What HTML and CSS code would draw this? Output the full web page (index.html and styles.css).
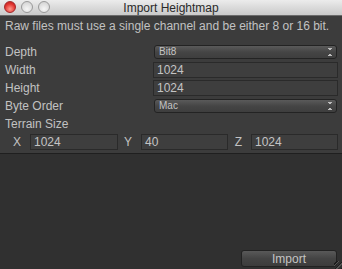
FILE: index.html
```html
<!DOCTYPE html>
<html lang="en">
<head>
    <meta charset="UTF-8">
    <title>Import Heightmap</title>
    <link rel="stylesheet" href="styles.css">
</head>
<body>

    <div class="window">
        <div class="titlebar">
            <div class="lights">
                <span class="light close"></span>
                <span class="light"></span>
                <span class="light"></span>
            </div>
            <div class="title">Import Heightmap</div>
        </div>

        <div class="panel">
            <p class="note">Raw files must use a single channel and be either 8 or 16 bit.</p>
            <div class="row">
                <label>Depth</label>
                <div class="popup">Bit8<span class="arrows"></span></div>
            </div>
            <div class="row">
                <label>Width</label>
                <div class="field">1024</div>
            </div>
            <div class="row">
                <label>Height</label>
                <div class="field">1024</div>
            </div>
            <div class="row">
                <label>Byte Order</label>
                <div class="popup">Mac<span class="arrows"></span></div>
            </div>
            <div class="row">
                <label>Terrain Size</label>
            </div>
            <div class="xyz">
                <label>X</label>
                <div class="field">1024</div>
                <label>Y</label>
                <div class="field">40</div>
                <label>Z</label>
                <div class="field">1024</div>
            </div>
        </div>

        <div class="footer">
            <button type="button">Import</button>
            <span class="grip"></span>
        </div>
    </div>

</body>
</html>
```

FILE: styles.css
```css
body {
    margin: 0;
    font-family: "Liberation Sans", Arial, sans-serif;
    background-color: #303030;
}
.window {
    width: 342px;
    height: 269px;
    display: flex;
    flex-direction: column;
    overflow: hidden;
}
.titlebar {
    height: 16px;
    position: relative;
    background: linear-gradient(#ececec, #c9c9c9);
    border-bottom: 1px solid #6a6a6a;
    box-sizing: border-box;
}
.lights {
    display: flex;
    gap: 5px;
    padding: 1px 0 0 4px;
}
.light {
    width: 12px;
    height: 12px;
    border-radius: 50%;
    box-sizing: border-box;
    border: 1px solid #9a9a9a;
    background: radial-gradient(circle at 50% 70%, #f6f6f6, #cdcdcd);
}
.light.close {
    border-color: #a3282a;
    background: radial-gradient(circle at 50% 70%, #ff9a8c, #e0332f 60%, #b81d1d);
}
.title {
    position: absolute;
    top: 1px;
    left: 0;
    right: 0;
    text-align: center;
    font-size: 12px;
    color: #2a2a2a;
}
.panel {
    background-color: #3c3c3c;
    padding: 1px 4px 2px 5px;
    border-bottom: 1px solid #1f1f1f;
    color: #c2c2c2;
}
.note {
    margin: 0 0 8px 0;
    height: 18px;
    line-height: 18px;
    font-size: 12px;
}
.row {
    display: flex;
    align-items: center;
    height: 18px;
}
.row label {
    width: 148px;
    font-size: 12px;
}
.row .field {
    flex: 1;
}
.field {
    height: 16px;
    box-sizing: border-box;
    background-color: #3e3e3e;
    border: 1px solid #2a2a2a;
    font-size: 12px;
    line-height: 14px;
    padding-left: 3px;
    color: #c4c4c4;
}
.popup {
    flex: 1;
    margin: 0 1px;
    height: 14px;
    box-sizing: border-box;
    border: 1px solid #232323;
    border-radius: 3px;
    background: linear-gradient(#5a5a5a, #454545 50%, #3e3e3e);
    font-size: 10px;
    line-height: 12px;
    padding-left: 4px;
    color: #c4c4c4;
    display: flex;
    justify-content: space-between;
    align-items: center;
}
.arrows {
    width: 4px;
    height: 8px;
    margin-right: 4px;
    background:
        linear-gradient(to top right, transparent 50%, #bdbdbd 50%) 0 0 / 2px 3px no-repeat,
        linear-gradient(to top left, transparent 50%, #bdbdbd 50%) 2px 0 / 2px 3px no-repeat,
        linear-gradient(to bottom right, transparent 50%, #bdbdbd 50%) 0 5px / 2px 3px no-repeat,
        linear-gradient(to bottom left, transparent 50%, #bdbdbd 50%) 2px 5px / 2px 3px no-repeat;
}
.xyz {
    display: grid;
    grid-template-columns: 25px 88px 23px 87px 23px 87px;
    align-items: center;
    height: 18px;
}
.xyz label {
    font-size: 12px;
    text-align: right;
    padding-right: 9px;
}
.footer {
    flex: 1;
    position: relative;
    display: flex;
    justify-content: flex-end;
    align-items: flex-end;
    padding: 0 5px 2px 0;
}
button {
    width: 96px;
    height: 17px;
    padding: 0;
    font-family: "Liberation Sans", Arial, sans-serif;
    font-size: 12px;
    color: #c4c4c4;
    border: 1px solid #222;
    border-radius: 3px;
    background: linear-gradient(#595959, #444 50%, #3c3c3c);
}
.grip {
    position: absolute;
    right: 0;
    bottom: 0;
    width: 8px;
    height: 8px;
    background: repeating-linear-gradient(135deg, transparent 0 2px, #1c1c1c 2px 3px, #555 3px 4px);
}
```
